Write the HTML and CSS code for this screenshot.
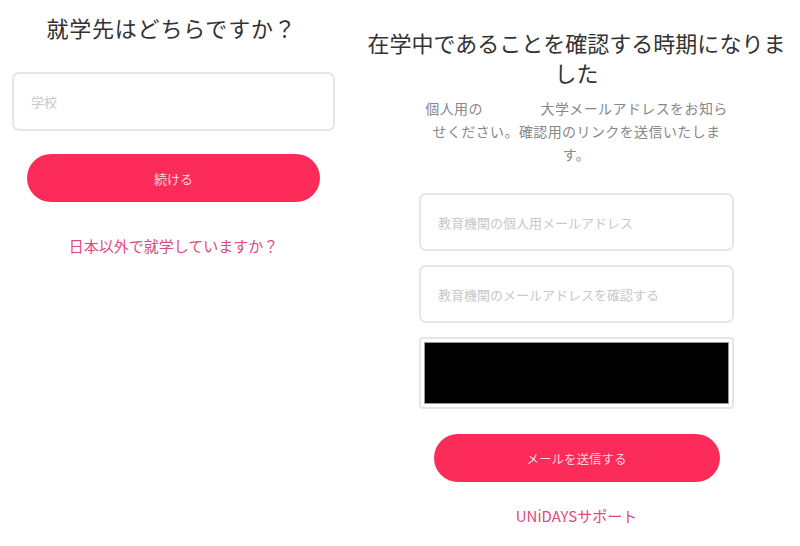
FILE: index.html
```html
<!DOCTYPE html>
<html lang="ja">
<head>
  <meta charset="UTF-8">
  <meta name="viewport" content="width=device-width, initial-scale=1.0">
  <title>UNiDAYS | 在学確認</title>
  <link rel="stylesheet" href="styles.css">
</head>
<body>

  <!-- school select start -->
  <div class="panel panel_left">
    <h1>就学先はどちらですか？</h1>
    <form class="form" onsubmit="event.preventDefault()">
      <input class="field" type="text" placeholder="学校">
      <button class="pill" type="submit">続ける</button>
    </form>
    <a class="link link_abroad" href="#">日本以外で就学していますか？</a>
  </div>
  <!-- school select end -->

  <!-- email verify start -->
  <div class="panel panel_right">
    <h1>在学中であることを確認する時期になりま<br>した</h1>
    <p class="desc">個人用の　　　　大学メールアドレスをお知ら<br>せください。確認用のリンクを送信いたしま<br>す。</p>
    <form class="form form_right" onsubmit="event.preventDefault()">
      <input class="field" type="email" placeholder="教育機関の個人用メールアドレス">
      <input class="field" type="email" placeholder="教育機関のメールアドレスを確認する">
      <div class="captcha"><div class="captcha_inner"></div></div>
      <button class="pill pill_send" type="submit">メールを送信する</button>
    </form>
    <a class="link link_support" href="#">UNiDAYSサポート</a>
  </div>
  <!-- email verify end -->

</body>
</html>
```

FILE: styles.css
```css
html {
  box-sizing: border-box;
}
*, *:before, *:after {
  box-sizing: inherit;
}
body {
  margin: 0;
  height: 546px;
  background-color: #fff;
  font-family: "Noto Sans CJK JP", "Noto Sans", sans-serif;
  color: #333;
  display: grid;
  grid-template-columns: 347px 447px;
  column-gap: 6px;
}
.panel {
  display: flex;
  flex-direction: column;
  align-items: center;
}
h1 {
  margin: 0;
  font-size: 22px;
  font-weight: 400;
  line-height: 30px;
  text-align: center;
  color: #333;
}
.panel_left h1 {
  margin-top: 12px;
  margin-right: 4px;
  letter-spacing: 0.8px;
}
.panel_right h1 {
  margin-top: 27px;
}
.desc {
  margin: 10px 0 0;
  font-size: 14px;
  letter-spacing: 0.4px;
  line-height: 23px;
  text-align: center;
  color: #888;
}
.form {
  display: flex;
  flex-direction: column;
  align-items: center;
  width: 100%;
}
.panel_left .form {
  margin-top: 30px;
}
.form_right {
  margin-top: 27px;
  gap: 14px;
}
.field {
  width: 323px;
  height: 59px;
  padding: 0 17px;
  border: 2px solid #e6e6e6;
  border-radius: 7px;
  font-family: inherit;
  font-size: 13px;
  color: #333;
  background: #fff;
}
.field::placeholder {
  color: #c8c8c8;
}
.form_right .field {
  width: 315px;
  height: 58px;
}
.captcha {
  width: 315px;
  height: 72px;
  padding: 3px;
  border: 2px solid #e6e6e6;
  border-radius: 4px;
}
.captcha_inner {
  height: 100%;
  background: #000;
  border: 1px solid #999;
}
.pill {
  width: 293px;
  height: 48px;
  margin-top: 23px;
  border: none;
  border-radius: 24px;
  background-color: #fc2b5a;
  color: rgba(255, 255, 255, 0.82);
  font-family: inherit;
  font-size: 13px;
  cursor: pointer;
}
.pill_send {
  width: 286px;
  margin-top: 11px;
  font-size: 12.5px;
}
.link {
  font-size: 15px;
  line-height: 20px;
  color: #de4a7d;
  text-decoration: none;
}
.link_abroad {
  margin-top: 34px;
}
.link_support {
  margin-top: 24px;
}
```
